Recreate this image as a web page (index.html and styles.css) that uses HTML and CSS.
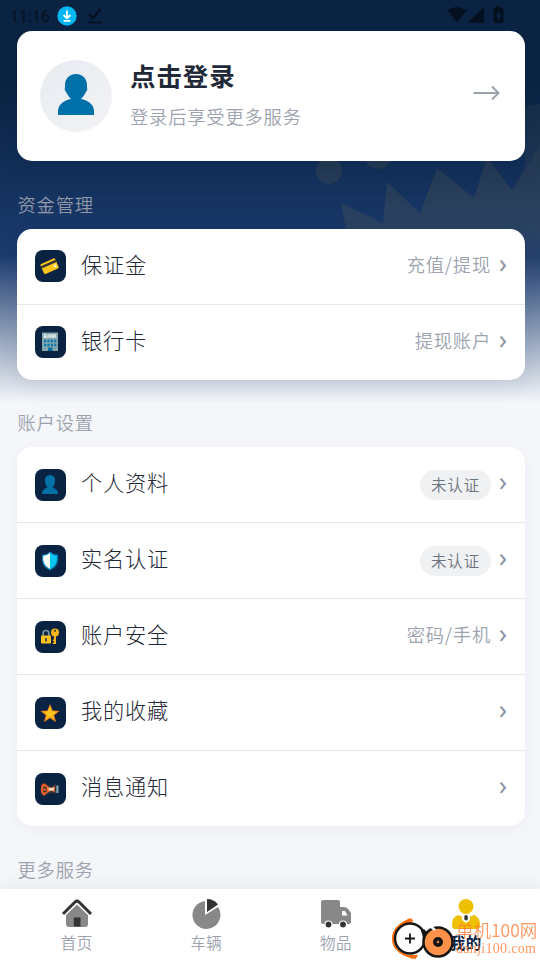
FILE: index.html
```html
<!DOCTYPE html>
<html lang="zh-CN">
<head>
<meta charset="utf-8">
<title>我的</title>
<link rel="stylesheet" href="styles.css">
</head>
<body>
<svg class="crown" viewBox="0 0 540 400" aria-hidden="true"><g fill="#a58a40" fill-opacity=".13"><circle cx="329" cy="171" r="13"/><circle cx="378" cy="156" r="13"/><path d="M341 203L383 223L387 182L420 213L437 168L474 198L487 157L512 190L540 145V278Q450 310 360 300Z"/><path d="M525 106L540 104V145L525 169Z" fill-opacity=".08"/></g></svg>
<header class="status">
  <span class="time">11:16</span>
  <svg class="download" viewBox="0 0 20 20"><circle cx="10" cy="10" r="9.7" fill="#00b7f4"/><path d="M10 4.5V12M6.5 9L10 12.3L13.5 9M6.5 14.8H13.5" fill="none" stroke="#fff" stroke-width="1.8"/></svg>
  <svg class="check" viewBox="0 0 16 18"><path d="M2 7L6 11L13.5 2M1.500 15.500H14.500" fill="none" stroke="#06101e" stroke-width="2.200"/></svg>
  <svg class="signals" viewBox="0 0 58 18"><g fill="#04101f"><path d="M.5 4.500Q10 -2.500 19.500 4.500L10 16.500Z"/><path d="M21 16.800L37 1V16.800Z"/><path d="M48.500 0H53.500V2H55.500Q56.500 2 56.500 3V16Q56.500 17 55.500 17H47.500Q46.500 17 46.500 16V3Q46.500 2 47.500 2H48.500Z"/></g><path d="M52.300 4.500L48.500 10.500H51V15L54.500 9H52.300Z" fill="#0a2342"/></svg>
</header>
<main>
  <section class="card login">
    <div class="avatar"><svg viewBox="0 0 36 42"><path d="M18 0C25 0 29 5 29 11V13Q30 16 28 18Q26 22 23 25C29 26 36 30 36 37V41H0V37C0 30 7 26 13 25Q10 22 8 18Q6 16 7 13V11C7 5 11 0 18 0Z" fill="#0070a8"/></svg></div>
    <div class="greeting"><h1>点击登录</h1><p>登录后享受更多服务</p></div>
    <svg class="arrow" viewBox="0 0 28 16"><path d="M.5 8H25M19 1.500L25.500 8L19 14.500" fill="none" stroke="#9ba3af" stroke-width="2"/></svg>
  </section>

  <h2 class="funds-title">资金管理</h2>
  <section class="card">
    <div class="row"><i><svg viewBox="0 0 20 20"><g transform="rotate(-24 10 10)"><rect x="1.500" y="4.500" width="16" height="11" rx="1.300" fill="#ffc61a"/><path d="M1.500 6.500H17.500V9H1.500Z" fill="#333638"/><circle cx="14.800" cy="12" r="1.600" fill="#fff4ce"/></g></svg></i><b>保证金</b><span>充值/提现</span><em>›</em></div>
    <div class="row"><i><svg viewBox="0 0 20 20"><path d="M2 .5H18V19H2Z" fill="#84a6ad"/><path d="M4 9H16.500M4 13H16.500" stroke="#0879b2" stroke-width="2.400" stroke-dasharray="2.200 1.200"/><path d="M8 15.500H12.500V19H8Z" fill="#006da2"/><text x="10" y="6" text-anchor="middle" textLength="13" lengthAdjust="spacingAndGlyphs" class="bank">BANK</text></svg></i><b>银行卡</b><span>提现账户</span><em>›</em></div>
  </section>

  <h2>账户设置</h2>
  <section class="card quiet">
    <div class="row"><i><svg viewBox="0 0 20 20"><path d="M10 0C14 0 15.500 3 15 6.500Q15 9.500 12.500 12.500Q18 14 18 19H2Q2 14 7.500 12.500Q5 9.500 5 6.500C4.500 3 6 0 10 0Z" fill="#0071a6"/></svg></i><b>个人资料</b><span class="badge">未认证</span><em>›</em></div>
    <div class="row"><i><svg viewBox="0 0 20 20"><path d="M10 .5Q13.500 4 18 3.500V8Q18 16 10 19.500Q2 16 2 8V3.500Q6.500 4 10 .5Z" fill="#0080b9"/><path d="M10 2Q6.500 5 3.200 4.800V9Q4 15 10 18Z" fill="#fff"/><path d="M10 2Q13.500 5 16.800 4.800V9Q16 15 10 18Z" fill="#0bc6f2"/></svg></i><b>实名认证</b><span class="badge">未认证</span><em>›</em></div>
    <div class="row"><i><svg viewBox="0 0 20 20"><path d="M3.200 9V6Q3.200 3.500 6 3.500T8.800 6V9" fill="none" stroke="#7699a2" stroke-width="1.700"/><rect x="1" y="8.500" width="10" height="8" rx=".8" fill="#ffc21a"/><path d="M6 11V14.500" stroke="#253342" stroke-width="1.600"/><circle cx="15" cy="5.500" r="4" fill="#fbb71a"/><circle cx="15" cy="3.800" r="1" fill="#0a2342"/><path d="M14 8H16V17H12.800V15.500H14V14H12.800V12.500H14Z" fill="#fbb71a"/></svg></i><b>账户安全</b><span>密码/手机</span><em>›</em></div>
    <div class="row"><i><svg viewBox="0 0 20 20"><path d="M10 1L12.600 7.500L19.500 8L14.200 12.300L16 19L10 15.200L4 19L5.800 12.300L.5 8L7.400 7.500Z" fill="#f58a18"/><path d="M10 3.500L12 8.300L17 8.800L13 12L14.200 16.500L10 13.800L6 16.500L7.100 12L3.500 8.800L8 8.300Z" fill="#ffc51d"/></svg></i><b>我的收藏</b><em>›</em></div>
    <div class="row"><i><svg viewBox="0 0 20 20"><path d="M4 4.500L11 9L16 6.500V13.500L11 12L4 16.500Z" fill="#f36a2b"/><path d="M4 4L11 8.500L16 5.500M16 14.500L11 12.500L4 16.500" fill="none" stroke="#39393b" stroke-width="1.400"/><ellipse cx="4" cy="10.500" rx="3.200" ry="6" fill="#e75f28"/><ellipse cx="4.800" cy="10.500" rx="1.800" ry="3" fill="#353236"/><circle cx="4.500" cy="10.500" r="1.200" fill="#f36a2b"/><path d="M8.500 9L14 8.500V11.500L8.500 11.500Z" fill="#ffd7bc"/><path d="M14.800 6H16.300V15H14.800Z" fill="#353236"/><path d="M16.300 6.500H18.500V14H16.300Z" fill="#7ca4ae"/></svg></i><b>消息通知</b><em>›</em></div>
  </section>
  <h2 class="more-title">更多服务</h2>
</main>
<nav>
  <div><svg viewBox="0 0 32 32"><path d="M5 17L16 6.500L27 17V26Q27 29 24 29H8Q5 29 5 26Z" fill="#888"/><path d="M12.800 19.500H19.500V28.500H12.800Z" fill="#333"/><path d="M2 16L14 4Q16 2.200 18 4L30 16" fill="none" stroke="#fff" stroke-width="5.200"/><path d="M2 16L14 4Q16 2.200 18 4L30 16" fill="none" stroke="#333" stroke-width="3"/></svg>首页</div>
  <div><svg viewBox="0 0 32 32"><path d="M15 3V17L28 9A14 14 0 1 1 15 3Z" fill="#888"/><path d="M17 1Q24 1 28 6.500L17 14Z" fill="#333"/></svg>车辆</div>
  <div><svg viewBox="0 0 32 32"><path d="M3 2H18Q20 2 20 4V9H24Q27 9 29 12L31 15V24Q31 26 29 26H3Q1 26 1 24V4Q1 2 3 2Z" fill="#888"/><path d="M22 13H25L27.500 17.500H22Z" fill="#fff"/><g fill="#333" stroke="#fff" stroke-width="1.200"><circle cx="8.500" cy="26.500" r="3.500"/><circle cx="23" cy="26.500" r="3.500"/></g></svg>物品</div>
  <div class="active"><svg viewBox="0 0 32 32"><circle cx="16" cy="8.500" r="7.500" fill="#edc100"/><path d="M8 17L16 20L24 17Q30 19 30 27Q30 31 27 31H5Q2 31 2 27Q2 19 8 17Z" fill="#edc100"/><path d="M12 18L16 16.500L20 18V22L16 25L12 22Z" fill="#fff"/><rect x="14.300" y="17" width="3.500" height="5.500" rx="1.700" fill="#333"/></svg>我的</div>
</nav>
<div class="watermark">
  <svg viewBox="0 0 66 44"><path d="M22 4Q17 2 10 8Q2 14 3 24Q4 33 15 38L25 41L27 38" fill="none" stroke="#ff6e0a" stroke-width="2"/><path d="M10 8L18 2Q22 0 23 4L21 6Z" fill="#ff6e0a"/><path d="M15 38L27 38L22 42Z" fill="#ff6e0a"/><circle cx="20" cy="21.500" r="15" fill="#fff" stroke="#161616" stroke-width="2.500"/><path d="M15 21.500H25M20 16.500V26.500" stroke="#161616" stroke-width="1.800"/><path d="M32 13Q35 20 34 27M33 13L37 17L43 12" fill="none" stroke="#161616" stroke-width="2.500"/><circle cx="48" cy="25" r="14.500" fill="#ff9148" stroke="#161616" stroke-width="2.500"/><circle cx="48" cy="25" r="5" fill="#161616"/><path d="M40 9L45 13" stroke="#fff" stroke-width="2.500"/><circle cx="48" cy="25" r="1.200" fill="#ff9148"/></svg>
  <p><strong>单机100网</strong><small>danji100.com</small></p>
</div>
</body>
</html>
```
FILE: styles.css
```css
* { box-sizing: border-box; }
body {
  margin: 0;
  height: 960px;
  overflow: hidden;
  display: flex;
  flex-direction: column;
  position: relative;
  font-family: "Noto Sans CJK SC", sans-serif;
  font-weight: 350;
  color: #1f2937;
  background: linear-gradient(#0a2342 0, #0a2342 80px, #1b3b6f 255px, #f4f6fa 403px);
}
h1, h2, p { margin: 0; }
svg { display: block; overflow: visible; }
.crown { position: absolute; left: 0; top: 0; width: 540px; height: 400px; -webkit-mask-image: linear-gradient(#000 230px, transparent 285px); }
.status { height: 31px; display: flex; align-items: center; padding: 0 35px 2px 10px; position: relative; color: #06101e; }
.time { font: 15.700px Roboto, sans-serif; letter-spacing: .2px; width: 47px; padding-top: 3px; }
.download { width: 20px; height: 20px; margin-top: 2px; }
.check { width: 16px; height: 18px; margin: 2px 0 0 10px; }
.signals { width: 58px; height: 18px; margin: 0 0 0 auto; }
main { position: relative; flex: 1; min-height: 0; overflow: hidden; padding: 0 15px 0 17px; }
.card { background: #fff; border-radius: 15px; box-shadow: 0 5px 20px rgba(10,35,66,.08); }
.quiet { box-shadow: 0 3px 14px rgba(10,35,66,.04); }
.login { height: 130px; display: flex; align-items: center; padding: 0 24px 0 23px; box-shadow: 0 8px 26px rgba(10,35,66,.2); }
.avatar { width: 72px; height: 72px; border-radius: 50%; background: linear-gradient(135deg, #e7ebf0, #f2f3f6); display: grid; place-items: center; }
.avatar svg { width: 36px; height: 42px; margin-top: -2px; }
.greeting { margin-left: 18px; margin-bottom: 7px; }
h1 { font-size: 25.500px; line-height: 38px; letter-spacing: .9px; font-weight: 600; }
.greeting p { font-size: 18.300px; line-height: 28px; margin-top: 8px; letter-spacing: .8px; color: #9ca3af; }
.arrow { width: 28px; height: 16px; margin: -6px 0 0 auto; }
h2 { height: 67px; padding: 29px 0 0 .5px; font-size: 18.300px; line-height: 27px; letter-spacing: .8px; font-weight: 350; color: #9ca3af; }
.funds-title { height: 68px; padding-top: 30px; color: #929aa8; }
.more-title { padding-top: 30px; }
.row { height: 76px; padding: 0 18px; display: flex; align-items: center; border-bottom: 1px solid #e5e7eb; }
.row:last-child { height: 75px; border: 0; }
.row i { width: 31px; height: 32px; border-radius: 8px; background: #0a2342; display: grid; place-items: center; }
.card:not(.quiet) .row i { margin-top: -2px; }
.row i svg { width: 20px; height: 20px; margin-left: -1px; }
.row b { font-size: 21.200px; line-height: 32px; font-weight: 300; letter-spacing: .8px; margin: 0 auto 6px 15px; }
.row span { font-size: 18.300px; line-height: 28px; letter-spacing: .8px; color: #9ca3af; margin-bottom: 5px; }
.row em { width: 16px; font: 400 27px/30px "Noto Sans", sans-serif; color: #8f97a4; text-align: right; margin-bottom: 8px; }
.row .badge { width: 71px; height: 30px; border-radius: 15px; background: #f0f1f3; color: #6b7280; font-size: 15.500px; text-align: center; margin: 0; }
.bank { font: 700 5.800px "Liberation Sans", sans-serif; fill: #fff; }
nav { height: 71px; position: relative; background: #fff; display: grid; grid-template-columns: repeat(4, 129.700px); padding-left: 11.800px; box-shadow: 0 -3px 15px rgba(10,35,66,.06); }
nav div { display: flex; flex-direction: column; align-items: center; padding-top: 9px; font-size: 15.500px; line-height: 23px; letter-spacing: .4px; color: #9ca3af; }
nav svg { width: 32px; height: 32px; margin-bottom: 1px; }
nav .active { color: #0a2342; font-weight: 700; }
.watermark { position: absolute; left: 390px; top: 917px; width: 150px; height: 43px; display: flex; }
.watermark svg { width: 66px; height: 44px; flex: none; }
.watermark p { color: #ff7c38; opacity: .8; white-space: nowrap; }
.watermark strong { display: block; font-size: 17.500px; line-height: 26px; font-weight: 350; }
.watermark small { display: block; font: 14px/14px "Liberation Serif", serif; letter-spacing: .3px; margin-top: -1px; }
```
